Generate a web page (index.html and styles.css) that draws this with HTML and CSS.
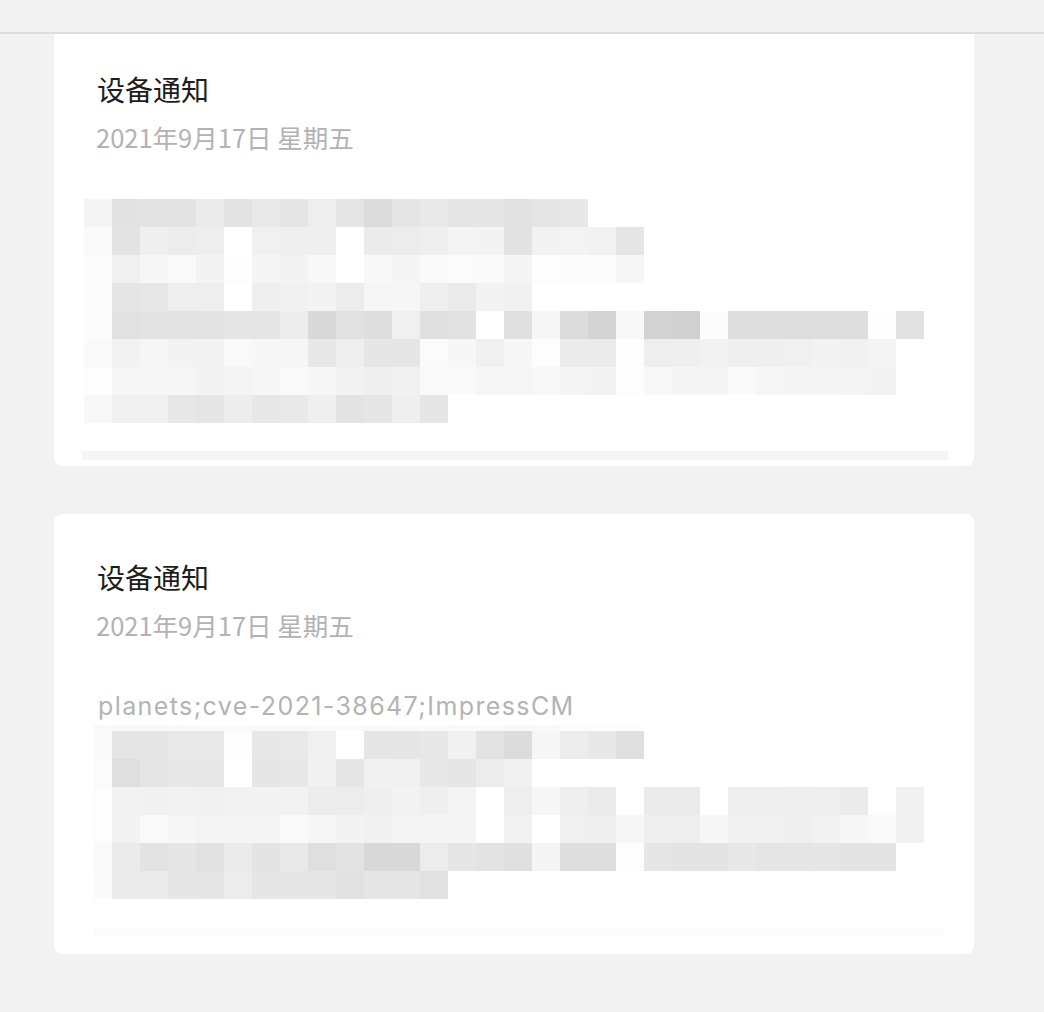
FILE: index.html
```html
<!DOCTYPE html>
<html lang="zh-CN">
  <head>
    <meta charset="UTF-8" />
    <meta name="viewport" content="width=device-width, initial-scale=1.0" />
    <title>设备通知</title>
    <link rel="stylesheet" href="styles.css">
  </head>
  <body>
    <header class="topbar"></header>

    <main class="feed">
      <article class="card">
        <h2 class="card__title">设备通知</h2>
        <div class="card__date">2021年9月17日 星期五</div>
        <div class="card__body">
          <div class="mosaic" data-mosaic="first"></div>
          <div class="card__bar"></div>
        </div>
      </article>

      <article class="card">
        <h2 class="card__title">设备通知</h2>
        <div class="card__date">2021年9月17日 星期五</div>
        <div class="card__body">
          <p class="card__note">planets;cve-2021-38647;ImpressCM</p>
          <div class="mosaic-clip">
            <div class="mosaic mosaic_shifted" data-mosaic="second"></div>
          </div>
          <div class="card__bar card__bar_light"></div>
        </div>
      </article>
    </main>

    <script>
      // пикселизованный текст сообщения: оттенки серого по ячейкам 28x28
      const mosaics = {
        first: [
          'f4 e2 e3 e3 eb e3 e9 e5 ee e5 dc e5 e9 e5 e5 e2 e6 e8',
          'fa e3 ef ec ee ff f0 ef ef ff eb ec ef f4 f3 e2 f2 f4 f2 e6',
          'fc f0 f6 f9 f3 fd f5 f3 f8 ff f8 f5 fa fb fa f5 fd fc fc f6',
          'fc e5 e7 ee ee ff ef f1 f3 ec f6 f6 ef eb f3 f1',
          'fc e1 e3 e3 e4 e5 e5 ed d9 e1 de f0 e0 e2 ff e0 f7 dc d4 f8 d2 d0 fc dd de dd dd de fe e1',
          'fa f2 f6 f3 f3 f9 f7 f6 e8 ef e6 e6 fb f7 f0 f7 fd eb eb fd ee ef f2 ef ef f0 f2 f1 f4',
          'fd f6 f6 f7 f3 f4 f6 f9 f6 f2 ef f1 f9 fa f6 f6 f8 f4 f3 fd f8 f5 f5 fa f6 f5 f5 f4 f3',
          'f8 f0 f0 e7 e5 ed e7 e9 ef e3 e6 ef e5',
        ],
        second: [
          'f9 f8 f8 f9 fa fa f9 f9 fa fa f9 fa fa f9 fa f8 f9 fb fd fd',
          'fa e5 e5 e9 e9 fd e8 e9 f0 ff e6 e6 e8 f1 e3 dc f6 ec e8 e0',
          'fb df e5 e7 e7 ff e6 e7 f1 e6 f1 f0 e8 e6 ec f0',
          'fd f2 f1 f2 f1 f2 f3 f2 ec ec ef f3 ef f4 ff ee f6 ef eb ff eb ea ff ef ef ee ef eb ff f1',
          'fd f2 f9 f6 f4 f4 f5 f9 f6 f3 f1 f4 f4 f5 ff f2 ff f0 ef f7 ef ee f6 f0 f1 ef f2 f7 fa f1',
          'f9 eb e3 e6 e1 eb e4 e9 df e3 d8 d8 ec e6 e3 e0 f5 de de fd e6 e4 e4 e8 e5 e5 e6 e4 e4',
          'fa eb eb e6 e5 ed e6 e6 e6 e1 e5 e5 e1',
        ],
      };

      document.querySelectorAll('[data-mosaic]').forEach((box) => {
        mosaics[box.dataset.mosaic].forEach((row) => {
          const cells = row.split(' ');
          for (let i = 0; i < 30; i++) {
            const cell = document.createElement('span');
            cell.className = 'mosaic__cell';
            if (cells[i]) {
              cell.style.backgroundColor = '#' + cells[i].repeat(3);
            }
            box.append(cell);
          }
        });
      });
    </script>
  </body>
</html>
```

FILE: styles.css
```css
:root {
  --page-bg: #f2f2f2;
  --card-radius: 8px;
  --cell: 28px;
}

body {
  margin: 0;
  background-color: var(--page-bg);
  font-family: 'Noto Sans CJK SC', 'Noto Sans', sans-serif;
}

.topbar {
  position: fixed;
  top: 0;
  left: 0;
  right: 0;
  height: 32px;
  background-color: var(--page-bg);
  border-bottom: 2px solid #dedede;
  z-index: 10;
}

.feed {
  padding: 26px 0 40px 54px;
}

.card {
  width: 920px;
  height: 440px;
  box-sizing: border-box;
  padding-top: 49px;
  margin-bottom: 48px;
  background-color: #fff;
  border-radius: var(--card-radius);
  overflow: hidden;
}

.card__title {
  margin: 0 0 0 43px;
  font-size: 28px;
  line-height: 28px;
  font-weight: 400;
  color: #1d1d1d;
}

.card__date {
  margin: 21px 0 0 42px;
  font-size: 25.5px;
  line-height: 26px;
  color: #b2b2b2;
}

.card__body {
  display: flow-root;
  margin-top: 49px;
  padding: 0 30px;
}

.card__note {
  margin: 5px 0 0 14px;
  font-family: Inter, 'Liberation Sans', sans-serif;
  font-size: 25px;
  line-height: 28px;
  letter-spacing: 1.4px;
  color: #b3b3b3;
}

.mosaic {
  display: grid;
  grid-template-columns: repeat(30, var(--cell));
  grid-auto-rows: var(--cell);
}

.mosaic-clip {
  width: 830px;
  height: 174px;
  margin: 5px 0 0 10px;
  overflow: hidden;
}

.mosaic_shifted {
  margin: -22px 0 0 -10px;
}

.card__bar {
  width: 866px;
  height: 9px;
  margin: 28px 0 0 -2px;
  background-color: #f5f5f5;
}

.card__bar_light {
  width: 850px;
  height: 8px;
  margin-top: 29px;
  margin-left: 10px;
  background-color: #fcfcfc;
}
```
